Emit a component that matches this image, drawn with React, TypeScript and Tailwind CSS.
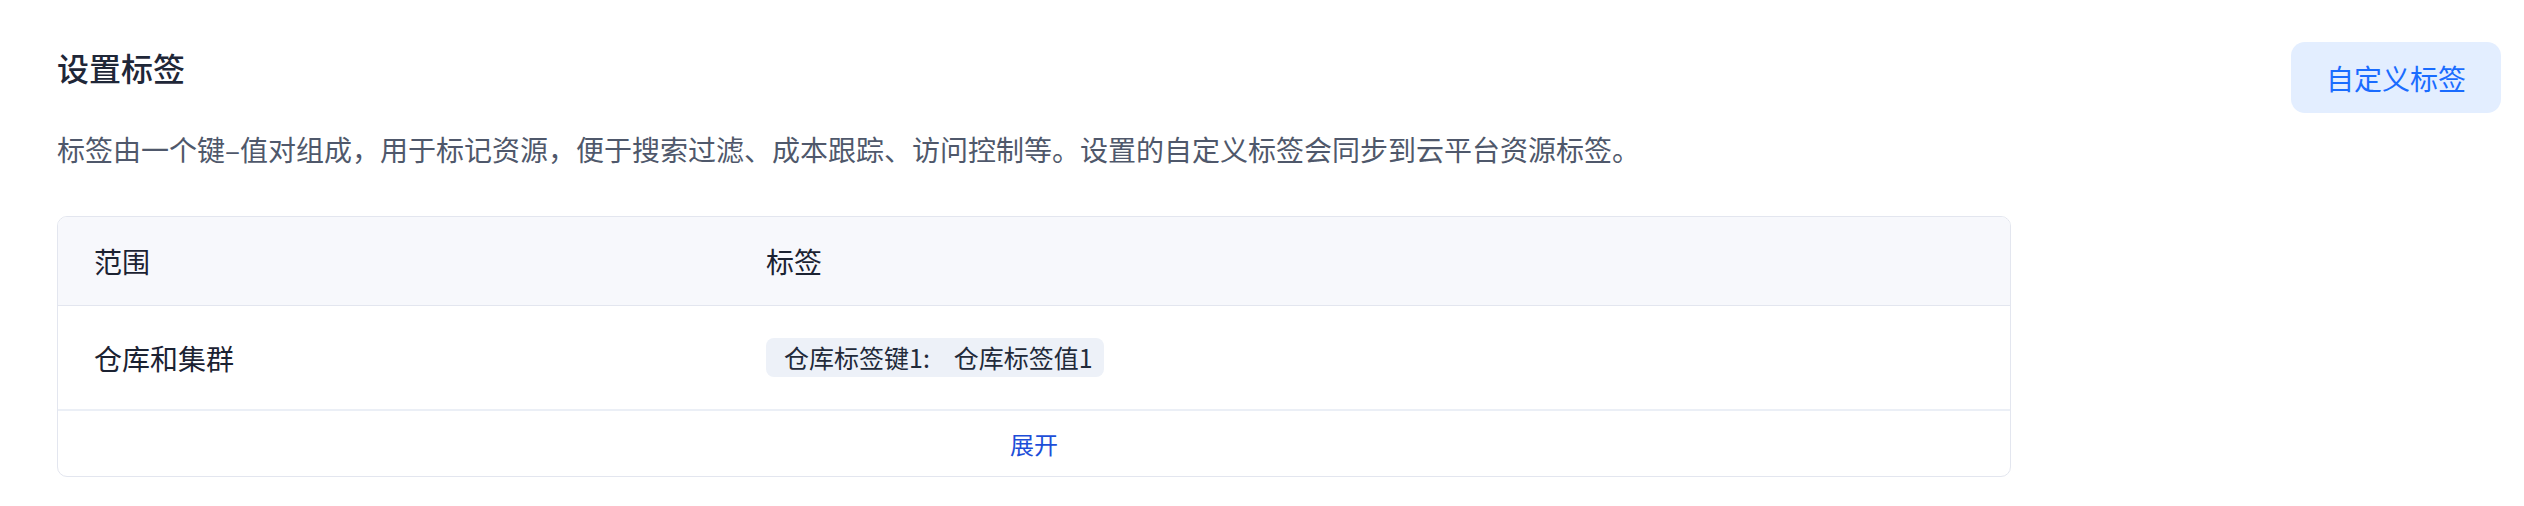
const font = { fontFamily: '"Noto Sans CJK SC", "Noto Sans", sans-serif' };

const tags = [{ key: "仓库标签键1", value: "仓库标签值1" }];

export default function App() {
  return (
    <main
      className="min-h-screen w-full bg-white pl-[57px] pr-[23px] pt-[42px]"
      style={font}
    >
      <div className="flex items-start justify-between">
        <div className="w-[1954px]">
          <h1 className="mt-[1px] text-[32px] leading-[48px] font-medium text-[#1f2738]">
            设置标签
          </h1>
          <p className="mt-[37px] text-[28px] leading-[42px] text-[#4f586b]">
            标签由一个键–值对组成，用于标记资源，便于搜索过滤、成本跟踪、访问控制等。设置的自定义标签会同步到云平台资源标签。
          </p>

          <div className="mt-[46px] overflow-hidden rounded-[10px] border border-[#e3e6ef]">
            <div className="flex h-[89px] items-center border-b border-[#e3e6ef] bg-[#f7f8fc] text-[28px] text-[#1b2232]">
              <div className="w-[672px] pl-[36px]">范围</div>
              <div className="pl-[36px]">标签</div>
            </div>
            <div className="flex h-[105px] items-center border-b-2 border-[#ebeff6] text-[28px] text-[#1b2232]">
              <div className="w-[672px] pl-[36px]">仓库和集群</div>
              <div className="flex gap-2 pl-[36px]">
                {tags.map((t) => (
                  <span
                    key={t.key}
                    className="flex h-[39px] w-[338px] items-center rounded-[8px] bg-[#edf1f8] pl-[18px] text-[25px] leading-none text-[#222a3a]"
                  >
                    <span>{t.key}:</span>
                    <span className="ml-[24px]">{t.value}</span>
                  </span>
                ))}
              </div>
            </div>
            <div className="flex h-[65px] items-center justify-center text-[24px] text-[#1d4ed8]">
              展开
            </div>
          </div>
        </div>

        <button className="flex h-[71px] w-[210px] items-center justify-center rounded-[14px] bg-[#e3eeff] text-[28px] text-[#1a6cff]">
          自定义标签
        </button>
      </div>
    </main>
  );
}
